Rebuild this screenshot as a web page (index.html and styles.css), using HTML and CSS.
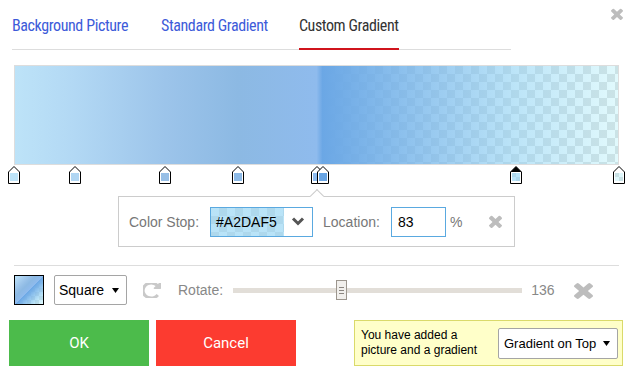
FILE: index.html
```html
<!DOCTYPE html>
<html>
<head>
    <title>Background Editor</title>
    <link rel="stylesheet" href="styles.css">
</head>
<body>
    <section class="dialog">

        <button class="close-btn" type="button" aria-label="Close">
            <svg width="12" height="12" viewBox="110 286 1188 1268" preserveAspectRatio="none"><path class="icon-x" d="M1298 1322q0 40-28 68l-136 136q-28 28-68 28t-68-28l-294-294-294 294q-28 28-68 28t-68-28l-136-136q-28-28-28-68t28-68l294-294-294-294q-28-28-28-68t28-68l136-136q28-28 68-28t68 28l294 294 294-294q28-28 68-28t68 28l136 136q28 28 28 68t-28 68l-294 294 294 294q28 28 28 68z"/></svg>
        </button>

        <nav class="tabs">
            <a class="tab" href="#">Background Picture</a>
            <a class="tab" href="#">Standard Gradient</a>
            <a class="tab active" href="#">Custom Gradient</a>
        </nav>

        <div class="editor">
            <div class="gradient-bar"></div>

            <div class="stops">
                <svg class="stop" style="left:0%" width="12" height="18" viewBox="0 0 12 18"><path class="stop-frame" d="M.5 17.5V6L6 .5 11.5 6v11.5z"/><rect x="2" y="7" width="8" height="8" fill="#bde3f8"/></svg>
                <svg class="stop" style="left:10%" width="12" height="18" viewBox="0 0 12 18"><path class="stop-frame" d="M.5 17.5V6L6 .5 11.5 6v11.5z"/><rect x="2" y="7" width="8" height="8" fill="#b0d6f3"/></svg>
                <svg class="stop" style="left:25%" width="12" height="18" viewBox="0 0 12 18"><path class="stop-frame" d="M.5 17.5V6L6 .5 11.5 6v11.5z"/><rect x="2" y="7" width="8" height="8" fill="#97bfe6"/></svg>
                <svg class="stop" style="left:37%" width="12" height="18" viewBox="0 0 12 18"><path class="stop-frame" d="M.5 17.5V6L6 .5 11.5 6v11.5z"/><rect x="2" y="7" width="8" height="8" fill="#8cb9e6"/></svg>
                <svg class="stop" style="left:50%" width="12" height="18" viewBox="0 0 12 18"><path class="stop-frame" d="M.5 17.5V6L6 .5 11.5 6v11.5z"/><rect x="2" y="7" width="8" height="8" fill="#8dbbee"/></svg>
                <svg class="stop" style="left:51%" width="12" height="18" viewBox="0 0 12 18"><path class="stop-frame" d="M.5 17.5V6L6 .5 11.5 6v11.5z"/><rect x="2" y="7" width="8" height="8" fill="#69a5e4"/></svg>
                <svg class="stop" style="left:83%" width="12" height="18" viewBox="0 0 12 18"><path class="stop-frame" d="M.5 17.5V6L6 .5 11.5 6v11.5z"/><path d="M.5 6L6 .5 11.5 6z"/><rect x="2" y="7" width="8" height="8" fill="#fff"/><rect x="2" y="7" width="4" height="4" fill="#ccc"/><rect x="6" y="11" width="4" height="4" fill="#ccc"/><rect x="2" y="7" width="8" height="8" fill="#a2daf5" opacity=".75"/></svg>
                <svg class="stop" style="left:100%" width="12" height="18" viewBox="0 0 12 18"><path class="stop-frame" d="M.5 17.5V6L6 .5 11.5 6v11.5z"/><rect x="2" y="7" width="8" height="8" fill="#fff"/><rect x="2" y="7" width="4" height="4" fill="#ccc"/><rect x="6" y="11" width="4" height="4" fill="#ccc"/><rect x="2" y="7" width="8" height="8" fill="#c4f0f8" opacity=".55"/></svg>
            </div>

            <div class="stop-panel">
                <label class="field-label">Color Stop:</label>
                <div class="color-field">
                    <span class="color-value">#A2DAF5</span>
                    <span class="color-toggle">
                        <svg width="14" height="9" viewBox="0 0 14 9"><path d="M2 1.5l5 5 5-5" fill="none" stroke="#555" stroke-width="3"/></svg>
                    </span>
                </div>
                <label class="field-label location-label">Location:</label>
                <div class="location-input">83</div>
                <span class="percent">%</span>
                <button class="remove-stop" type="button" aria-label="Remove stop">
                    <svg width="13" height="13" viewBox="110 286 1188 1268" preserveAspectRatio="none"><path class="icon-x" d="M1298 1322q0 40-28 68l-136 136q-28 28-68 28t-68-28l-294-294-294 294q-28 28-68 28t-68-28l-136-136q-28-28-28-68t28-68l294-294-294-294q-28-28-28-68t28-68l136-136q28-28 68-28t68 28l294 294 294-294q28-28 68-28t68 28l136 136q28 28 28 68t-28 68l-294 294 294 294q28 28 28 68z"/></svg>
                </button>
            </div>
        </div>

        <div class="rule"></div>

        <div class="toolbar">
            <div class="swatch"></div>
            <div class="select shape-select">
                <span>Square</span>
                <svg width="7" height="5" viewBox="0 0 7 5"><path d="M0 0h7L3.5 5z"/></svg>
            </div>
            <svg class="rotate-icon" width="18" height="15" viewBox="128 256 1408 1280" preserveAspectRatio="none"><path d="M1536 256v448q0 26-19 45t-45 19h-448q-42 0-59-40-17-39 14-69l138-138q-148-137-349-137-104 0-198.5 40.5t-163.5 109.5-109.5 163.5-40.5 198.5 40.5 198.5 109.5 163.5 163.5 109.5 198.5 40.5q119 0 225-52t179-147q7-10 23-12 15 0 25 9l137 138q9 8 9.5 20.5t-7.5 22.5q-109 132-264 204.5t-327 72.5q-156 0-298-61t-245-164-164-245-61-298 61-298 164-245 245-164 298-61q147 0 284.5 55.5t244.5 156.5l130-129q29-31 70-14 39 17 39 59z"/></svg>
            <span class="rotate-label">Rotate:</span>
            <div class="slider">
                <div class="slider-track"></div>
                <div class="slider-thumb" style="left:103px"><i></i><i></i><i></i></div>
            </div>
            <span class="rotate-value">136</span>
            <button class="reset-btn" type="button" aria-label="Reset">
                <svg width="19" height="17" viewBox="110 286 1188 1268" preserveAspectRatio="none"><path class="icon-x" d="M1298 1322q0 40-28 68l-136 136q-28 28-68 28t-68-28l-294-294-294 294q-28 28-68 28t-68-28l-136-136q-28-28-28-68t28-68l294-294-294-294q-28-28-28-68t28-68l136-136q28-28 68-28t68 28l294 294 294-294q28-28 68-28t68 28l136 136q28 28 28 68t-28 68l-294 294 294 294q28 28 28 68z"/></svg>
            </button>
        </div>

        <div class="footer">
            <button class="btn btn-ok" type="button">OK</button>
            <button class="btn btn-cancel" type="button">Cancel</button>
            <div class="notice">
                <p>You have added a<br>picture and a gradient</p>
                <div class="select layer-select">
                    <span>Gradient on Top</span>
                    <svg width="7" height="5" viewBox="0 0 7 5"><path d="M0 0h7L3.5 5z"/></svg>
                </div>
            </div>
        </div>

    </section>
</body>
</html>
```

FILE: styles.css
```css
body {
    margin: 0;
    background-color: #FFFFFF;
    color: #000000;
    font-family: "Liberation Sans", Arial, sans-serif;
    font-size: 14px;
}

.dialog {
    position: relative;
    width: 633px;
    height: 378px;
}

button {
    border: 0;
    padding: 0;
    background: none;
    cursor: pointer;
}

.icon-x {
    fill: #bdbdbd;
}

.close-btn {
    position: absolute;
    top: 8px;
    right: 10px;
    display: flex;
}

/* tabs */
.tabs {
    display: flex;
    width: 499px;
    margin-left: 12px;
    border-bottom: 1px solid #dddddd;
}

.tab {
    font-family: "Liberation Sans Narrow", "Roboto Condensed", Roboto, sans-serif;
    font-size: 16px;
    letter-spacing: -0.4px;
    line-height: 18px;
    padding: 17px 0 13px;
    margin: 0 31px -1px 0;
    border-bottom: 2px solid transparent;
    color: #3d5bd9;
    text-decoration: none;
}

.tab:first-child {
    margin-right: 33px;
}

.tab.active {
    color: #333333;
    border-bottom-color: #d0141c;
}

/* gradient editor */
.editor {
    width: 605px;
    margin: 15px 0 0 14px;
}

.gradient-bar,
.swatch {
    background-color: #FFFFFF;
    background-image:
        linear-gradient(to right, #bde3f8 0%, #b2d8f4 10%, #9cc4ea 25%, #8cb9e3 37%, #8fbbed 50%, #6ba7e5 51%, rgba(162, 218, 245, 0.72) 83%, rgba(196, 244, 250, 0.5) 100%),
        linear-gradient(45deg, #d2d2d2 25%, transparent 25%, transparent 75%, #d2d2d2 75%),
        linear-gradient(45deg, #d2d2d2 25%, transparent 25%, transparent 75%, #d2d2d2 75%);
    background-size: 100% 100%, 16px 16px, 16px 16px;
    background-position: 0 0, 0 0, 8px 8px;
}

.gradient-bar {
    height: 100px;
    box-sizing: border-box;
    border: 1px solid #dddddd;
}

.stops {
    position: relative;
    height: 18px;
    margin-top: 1px;
}

.stop {
    position: absolute;
    top: 0;
    margin-left: -6px;
}

.stop-frame {
    fill: #FFFFFF;
    stroke: #000000;
}

.stop-panel {
    position: relative;
    display: flex;
    align-items: center;
    box-sizing: border-box;
    width: 397px;
    height: 51px;
    margin: 12px auto 0;
    padding: 0 10px;
    border: 1px solid #cccccc;
    color: #777777;
}

.stop-panel::before {
    content: "";
    position: absolute;
    top: -6px;
    left: 193px;
    width: 9px;
    height: 9px;
    background-color: #FFFFFF;
    border-left: 1px solid #cccccc;
    border-top: 1px solid #cccccc;
    transform: rotate(45deg);
}

.color-field {
    display: flex;
    box-sizing: border-box;
    width: 103px;
    height: 30px;
    margin-left: 11px;
    border: 1px solid #5aa9e0;
}

.color-value {
    flex: 1;
    padding-left: 5px;
    line-height: 28px;
    color: #000000;
    background-color: #FFFFFF;
    background-image:
        linear-gradient(rgba(162, 218, 245, 0.75), rgba(162, 218, 245, 0.75)),
        linear-gradient(45deg, #d2d2d2 25%, transparent 25%, transparent 75%, #d2d2d2 75%),
        linear-gradient(45deg, #d2d2d2 25%, transparent 25%, transparent 75%, #d2d2d2 75%);
    background-size: 100% 100%, 16px 16px, 16px 16px;
    background-position: 0 0, 0 0, 8px 8px;
}

.color-toggle {
    display: flex;
    align-items: center;
    justify-content: center;
    width: 28px;
    background-color: #FFFFFF;
}

.location-label {
    margin-left: 10px;
}

.location-input {
    box-sizing: border-box;
    width: 55px;
    height: 30px;
    margin-left: 11px;
    padding-left: 6px;
    line-height: 28px;
    border: 1px solid #5aa9e0;
    color: #000000;
}

.percent {
    margin-left: 4px;
}

.remove-stop {
    display: flex;
    margin-left: 27px;
}

.rule {
    width: 605px;
    height: 1px;
    margin: 18px 0 0 14px;
    background-color: #dddddd;
}

/* rotate toolbar */
.toolbar {
    display: flex;
    align-items: center;
    height: 30px;
    margin: 9px 0 0 14px;
    color: #888888;
}

.swatch {
    box-sizing: border-box;
    width: 30px;
    height: 30px;
    border: 1px solid #000000;
    background-image:
        linear-gradient(135deg, #bde3f8 0%, #b2d8f4 10%, #9cc4ea 25%, #8cb9e3 37%, #8fbbed 50%, #6ba7e5 51%, rgba(162, 218, 245, 0.72) 83%, rgba(196, 244, 250, 0.5) 100%),
        linear-gradient(45deg, #d2d2d2 25%, transparent 25%, transparent 75%, #d2d2d2 75%),
        linear-gradient(45deg, #d2d2d2 25%, transparent 25%, transparent 75%, #d2d2d2 75%);
    background-size: 100% 100%, 8px 8px, 8px 8px;
    background-position: 0 0, 0 0, 4px 4px;
}

.select {
    display: flex;
    align-items: center;
    justify-content: space-between;
    box-sizing: border-box;
    border: 1px solid #a5a5a5;
    border-radius: 2px;
    background-color: #FFFFFF;
    color: #000000;
}

.shape-select {
    width: 73px;
    height: 30px;
    margin-left: 10px;
    padding: 0 7px 0 4px;
}

.rotate-icon {
    margin-left: 16px;
    fill: #c9c9c9;
}

.rotate-label {
    margin-left: 17px;
}

.slider {
    position: relative;
    width: 289px;
    height: 20px;
    margin-left: 10px;
}

.slider-track {
    position: absolute;
    left: 0;
    right: 0;
    top: 8px;
    height: 5px;
    background-color: #e2ded8;
}

.slider-thumb {
    position: absolute;
    top: 0;
    display: flex;
    flex-direction: column;
    align-items: center;
    justify-content: center;
    gap: 2px;
    box-sizing: border-box;
    width: 11px;
    height: 20px;
    border: 1px solid #9c968e;
    background-color: #f1efec;
}

.slider-thumb i {
    width: 5px;
    height: 1px;
    background-color: #8a8580;
}

.rotate-value {
    margin-left: 9px;
}

.reset-btn {
    display: flex;
    margin-left: 19px;
}

/* footer */
.footer {
    display: flex;
    height: 46px;
    margin: 15px 0 0 9px;
}

.btn {
    width: 140px;
    height: 46px;
    color: #FFFFFF;
    font-family: Roboto, "Liberation Sans", sans-serif;
    font-size: 15px;
}

.btn-ok {
    background-color: #4cbb4b;
}

.btn-cancel {
    margin-left: 7px;
    background-color: #fc3b30;
}

.notice {
    display: flex;
    align-items: center;
    justify-content: space-between;
    box-sizing: border-box;
    width: 269px;
    margin-left: 58px;
    padding: 0 4px 0 6px;
    border: 1px solid #dada6a;
    background-color: #ffffc9;
    font-size: 12px;
    line-height: 15px;
}

.notice p {
    margin: 0;
}

.layer-select {
    width: 120px;
    height: 31px;
    padding: 0 7px 0 5px;
    font-size: 13px;
}
```
